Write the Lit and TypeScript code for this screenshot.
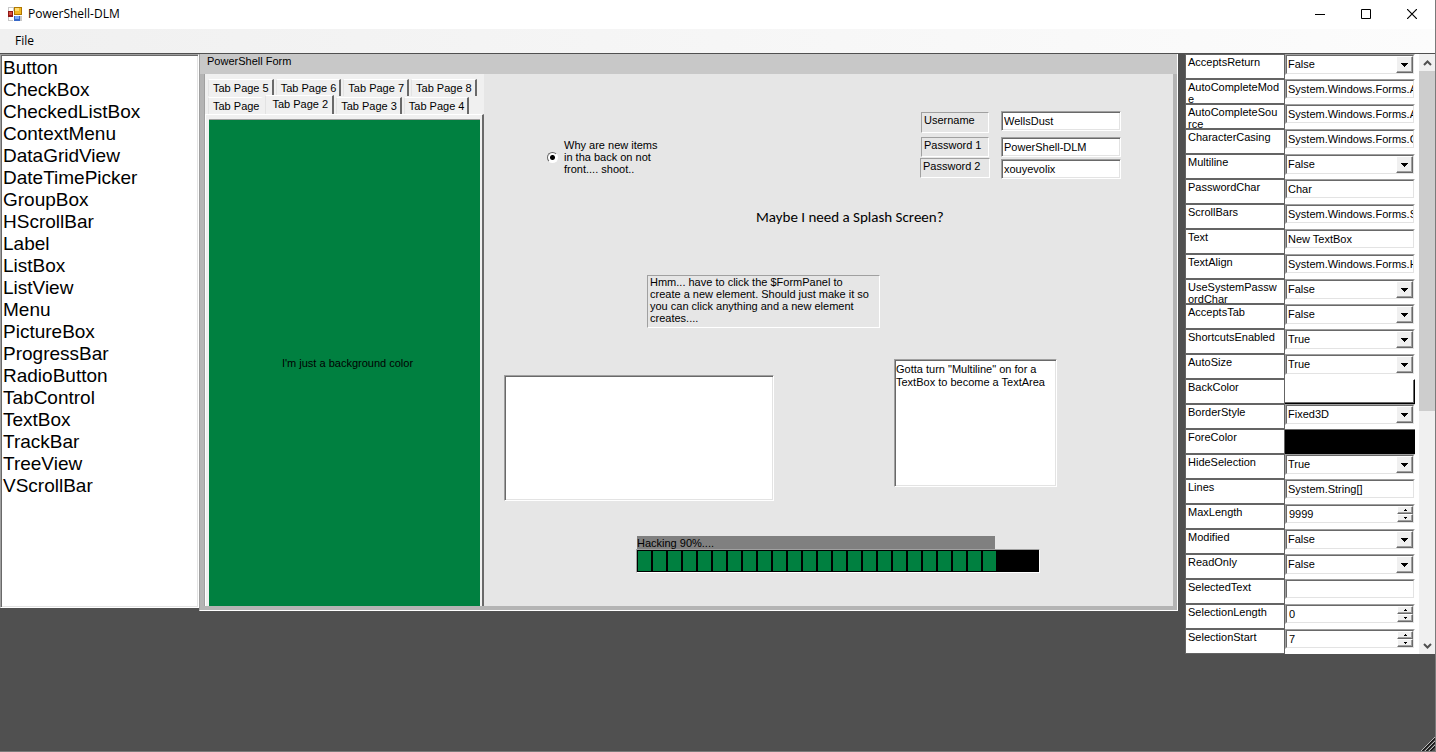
import { LitElement, html, svg, css } from "lit";
import { customElement } from "lit/decorators.js";

type Kind = "select" | "text" | "number" | "back" | "fore";

const CONTROLS = [
  "Button", "CheckBox", "CheckedListBox", "ContextMenu", "DataGridView",
  "DateTimePicker", "GroupBox", "HScrollBar", "Label", "ListBox", "ListView",
  "Menu", "PictureBox", "ProgressBar", "RadioButton", "TabControl", "TextBox",
  "TrackBar", "TreeView", "VScrollBar",
];

const PROPERTIES: [string, Kind, string][] = [
  ["AcceptsReturn", "select", "False"],
  ["AutoCompleteMode", "text", "System.Windows.Forms.AutoCompleteMode"],
  ["AutoCompleteSource", "text", "System.Windows.Forms.AutoCompleteSource"],
  ["CharacterCasing", "text", "System.Windows.Forms.CharacterCasing"],
  ["Multiline", "select", "False"],
  ["PasswordChar", "text", "Char"],
  ["ScrollBars", "text", "System.Windows.Forms.ScrollBars"],
  ["Text", "text", "New TextBox"],
  ["TextAlign", "text", "System.Windows.Forms.HorizontalAlignment"],
  ["UseSystemPasswordChar", "select", "False"],
  ["AcceptsTab", "select", "False"],
  ["ShortcutsEnabled", "select", "True"],
  ["AutoSize", "select", "True"],
  ["BackColor", "back", ""],
  ["BorderStyle", "select", "Fixed3D"],
  ["ForeColor", "fore", ""],
  ["HideSelection", "select", "True"],
  ["Lines", "text", "System.String[]"],
  ["MaxLength", "number", "9999"],
  ["Modified", "select", "False"],
  ["ReadOnly", "select", "False"],
  ["SelectedText", "text", ""],
  ["SelectionLength", "number", "0"],
  ["SelectionStart", "number", "7"],
];

@customElement("property-grid")
export class PropertyGrid extends LitElement {
  static styles = css`
    :host { display: flex; background: #fff; font: 11px/12px "Liberation Sans", Arial, sans-serif; color: #000; }
    * { box-sizing: border-box; }
    .rows { flex: 1; min-width: 0; padding-right: 4px; }
    .row { display: grid; grid-template-columns: 100px minmax(0, 1fr); height: 25px; }
    .name { border: 1px solid #646464; padding: 1px 4px 0 2px; overflow: hidden; word-break: break-all; }
    input, select, button { font: inherit; color: inherit; margin: 0; border-radius: 0; outline: 0; }
    .field { display: flex; height: 20px; background: #fff; border: 1px solid; border-color: #a0a0a0 #fff #fff #a0a0a0; }
    .inner { display: grid; grid-template-columns: minmax(0, 1fr) auto; flex: 1; min-width: 0; border: 1px solid; border-color: #696969 #e3e3e3 #e3e3e3 #696969; }
    .inner > input { width: 100%; min-width: 0; height: 16px; padding: 0 0 0 1px; border: 0; background: none; appearance: textfield; }
    .inner > input::-webkit-inner-spin-button { display: none; }
    .select { height: 21px; }
    .select select { grid-area: 1 / 1 / 2 / 3; width: 100%; appearance: none; border: 0; padding: 0 0 2px 1px; background: none; }
    .drop { grid-area: 1 / 2; display: grid; place-items: center; width: 17px; pointer-events: none; }
    .raised { background: #f0f0f0; border: 1px solid; border-color: #fff #696969 #696969 #fff; box-shadow: inset -1px -1px #a0a0a0; }
    .spin { display: grid; grid-template-rows: 1fr 1fr; width: 16px; }
    .spin button { display: grid; place-items: center; min-height: 0; padding: 0; }
    .number .inner > input { padding-left: 2px; }
    .swatch { height: 25px; width: 100%; padding: 0; }
    .back { background: #fff; border: solid; border-width: 1px 1px 1px 0; border-color: #fff #000 #000; box-shadow: inset -1px -1px #696969; }
    .fore { background: #000; border: 0; border-top: 1px solid #696969; }
    .scroll { display: flex; flex-direction: column; width: 16px; background: #f0f0f0; }
    .scroll button { display: grid; place-items: center; height: 17px; padding: 0; border: 0; background: none; }
    .track { flex: 1; }
    .thumb { height: 60%; background: #cdcdcd; }
  `;

  private control(name: string, kind: Kind, value: string) {
    if (kind === "back" || kind === "fore")
      return html`<button id=${name} class="swatch ${kind}" aria-label=${name}></button>`;
    if (kind === "select")
      return html`<div class="field select"><div class="inner">
        <select id=${name}><option>${value}</option></select>
        <span class="drop raised"><svg width="7" height="4"><path d="M0 0h7v1h-1v1h-1v1h-1v1h-1v-1h-1v-1h-1v-1h-1z"/></svg></span>
      </div></div>`;
    if (kind === "number")
      return html`<div class="field number"><div class="inner">
        <input id=${name} type="number" .value=${value}>
        <span class="spin">
          <button class="raised" aria-label="Increase"><svg width="3" height="2"><path d="M1 0h1v1h1v1h-3v-1h1z"/></svg></button>
          <button class="raised" aria-label="Decrease"><svg width="3" height="2"><path d="M0 0h3v1h-1v1h-1v-1h-1z"/></svg></button>
        </span>
      </div></div>`;
    return html`<div class="field"><div class="inner"><input id=${name} type="text" .value=${value}></div></div>`;
  }

  render() {
    return html`
      <div class="rows">
        ${PROPERTIES.map(([name, kind, value]) => html`
          <div class="row"><label class="name" for=${name}>${name}</label>${this.control(name, kind, value)}</div>`)}
      </div>
      <div class="scroll">
        <button aria-label="Scroll up"><svg width="9" height="6"><path d="M1 5l3.500-3.500L8 5" fill="none" stroke="#505050" stroke-width="2"/></svg></button>
        <div class="track"><div class="thumb"></div></div>
        <button aria-label="Scroll down"><svg width="9" height="6"><path d="M1 1l3.500 3.500L8 1" fill="none" stroke="#505050" stroke-width="2"/></svg></button>
      </div>`;
  }
}

@customElement("design-form")
export class DesignForm extends LitElement {
  static styles = css`
    :host { display: flex; flex-direction: column; border: 1px solid; border-color: transparent #fff #fff #a0a0a0; border-top: 0; background: #b4b4b4; font: 11px/12px "Liberation Sans", Arial, sans-serif; color: #000; }
    * { box-sizing: border-box; }
    .caption { height: 20px; padding: 1px 7px; background: #c8c8c8; }
    .surface { display: flex; flex: 1; min-height: 532px; margin: 0 4px; background: #e6e6e6; }
    .foot { height: 4px; }
    button, input, textarea { font: inherit; color: inherit; margin: 0; border-radius: 0; outline: 0; }

    .tabs { display: flex; flex-direction: column; width: 280px; padding-top: 5px; background: #f0f0f0; border-left: 1px solid #a0a0a0; }
    .strip { display: flex; gap: 2px; height: 18px; padding-left: 3px; }
    .strip.near { height: 17px; }
    .tab { height: 17px; padding: 0 3px 1px 4px; white-space: nowrap; background: #f0f0f0; border: solid; border-width: 1px 2px 0 1px; border-color: #fff #696969 #696969 #e3e3e3; }
    .tab.plain { border-right-color: #f0f0f0; padding-right: 2px; }
    .tab.active { height: 20px; margin-top: -2px; padding: 0 4px 3px 6px; }
    .page { flex: 1; display: flex; padding: 4px 2px 0 3px; border: solid; border-width: 1px 2px 0 1px; border-color: #fff #696969 #696969 #fff; }
    .fill { flex: 1; display: grid; place-items: center; padding-left: 6px; background: #008040; border-top: 1px solid #a0a0a0; }

    .canvas { position: relative; flex: 1; min-width: 0; overflow: hidden; }
    .item { position: absolute; }
    .sunk { border: 1px solid; border-color: #a0a0a0 #fff #fff #a0a0a0; padding: 1px 2px; }
    .box { background: #fff; border: 1px solid; border-color: #a0a0a0 #fff #fff #a0a0a0; box-shadow: inset 1px 1px #696969, inset -1px -1px #e3e3e3; padding: 2px; resize: none; }
    .radio { left: 63px; top: 65px; width: 116px; display: flex; align-items: center; gap: 6px; }
    .radio input { appearance: none; flex: none; width: 11px; height: 11px; border-radius: 50%; background: radial-gradient(circle, #000 0 2px, #fff 3px); border: 1px solid; border-color: #696969 #fff #fff #696969; }
    .user { left: 437px; top: 38px; width: 68px; height: 21px; }
    .pass1 { left: 437px; top: 63px; width: 68px; height: 20px; }
    .pass2 { left: 436px; top: 84px; width: 70px; height: 20px; }
    .in1, .in2, .in3 { left: 517px; width: 120px; height: 20px; }
    .in1 { top: 37px; }
    .in2 { top: 63px; }
    .in3 { top: 85px; }
    .splash { left: 272px; top: 134px; font: 15px/18px Carlito, Lato, sans-serif; white-space: nowrap; }
    .note { left: 163px; top: 201px; width: 233px; height: 53px; padding: 0 6px 0 2px; }
    .empty { left: 20px; top: 301px; width: 270px; height: 126px; }
    .area { left: 410px; top: 285px; width: 163px; height: 128px; line-height: 13px; padding: 3px 1px; }
    .hack { left: 153px; top: 462px; width: 358px; height: 13px; padding-top: 1px; background: #808080; }
    .bar { left: 152px; top: 475px; width: 404px; height: 24px; display: flex; gap: 2px; padding: 1px; background: #000; border: 1px solid; border-color: #a0a0a0 #fff #fff #a0a0a0; }
    .chunk { width: 13px; background: #008040; }
  `;

  render() {
    return html`
      <div class="caption">PowerShell Form</div>
      <div class="surface">
        <div class="tabs">
          <div class="strip">
            ${[5, 6, 7, 8].map((n) => html`<button class="tab">Tab Page ${n}</button>`)}
          </div>
          <div class="strip near">
            <button class="tab plain">Tab Page</button>
            <button class="tab active">Tab Page 2</button>
            <button class="tab">Tab Page 3</button>
            <button class="tab">Tab Page 4</button>
          </div>
          <div class="page"><div class="fill">I'm just a background color</div></div>
        </div>
        <div class="canvas">
          <label class="item radio"><input type="radio" checked><span>Why are new items in tha back on not front.... shoot..</span></label>
          <label class="item sunk user" for="u">Username</label>
          <label class="item sunk pass1" for="p1">Password 1</label>
          <label class="item sunk pass2" for="p2">Password 2</label>
          <input class="item box in1" id="u" value="WellsDust">
          <input class="item box in2" id="p1" value="PowerShell-DLM">
          <input class="item box in3" id="p2" value="xouyevolix">
          <div class="item splash">Maybe I need a Splash Screen?</div>
          <div class="item sunk note">Hmm... have to click the $FormPanel to create a new element. Should just make it so you can click anything and a new element creates....</div>
          <textarea class="item box empty" aria-label="Empty text box"></textarea>
          <textarea class="item box area" aria-label="Text area" .value=${'Gotta turn "Multiline" on for a TextBox to become a TextArea'}></textarea>
          <div class="item hack">Hacking 90%....</div>
          <div class="item bar" role="progressbar" aria-label="Hacking" aria-valuenow="90">
            ${Array.from({ length: 24 }, () => html`<span class="chunk"></span>`)}
          </div>
        </div>
      </div>
      <div class="foot"></div>`;
  }
}

@customElement("app-root")
export class AppRoot extends LitElement {
  static styles = css`
    :host { display: flex; flex-direction: column; position: relative; box-sizing: border-box; height: 100vh; overflow: hidden; background: #505050; border: solid #7a7a7a; border-width: 0 1px 1px 0; font: 12px/16px "Open Sans", sans-serif; color: #000; }
    * { box-sizing: border-box; }
    button { font: inherit; color: inherit; border: 0; background: none; padding: 0; }
    .title { display: flex; align-items: center; height: 29px; padding: 0 0 2px 8px; background: #fff; }
    .name { flex: 1; padding-left: 6px; }
    .win { display: grid; place-items: center; width: 46px; height: 26px; }
    .menu { display: flex; align-items: center; height: 25px; padding-left: 15px; background: linear-gradient(90deg, #f0f0f0, #fcfcfc); border-bottom: 1px solid #505050; }
    .main { display: flex; align-items: flex-start; gap: 7px; }
    .left { flex: 1; min-width: 0; display: flex; }
    .tools { width: 199px; margin: 0 0 3px; padding: 2px; list-style: none; background: #fff; border: 1px solid; border-color: #a0a0a0 #fff #fff #a0a0a0; box-shadow: inset 1px 1px #696969, inset -1px -1px #e3e3e3; font: 19px/22px "Liberation Sans", Arial, sans-serif; }
    .tools li { display: flex; }
    .tools button { flex: 1; text-align: left; }
    design-form { flex: 1; min-width: 0; }
    property-grid { width: 250px; }
    .grip { position: absolute; right: 0; bottom: 0; }
  `;

  render() {
    const line = (d: string, w = 1) => svg`<path d=${d} fill="none" stroke="#000" stroke-width=${w}/>`;
    return html`
      <header class="title">
        <svg width="14" height="14" shape-rendering="crispEdges">
          <path d="M0 0h6v4h-6zM0 10h5v4h-5zM12 9h2v5h-2z" fill="#c8c8c8"/>
          <path d="M1 1h4v3h-4zM1 10h4v3h-4z" fill="#fff"/>
          <path d="M6 0h8v8h-8z" fill="#b07800"/><path d="M7 1h6v6h-6z" fill="#f2b822"/><path d="M7 1h4v3h-4z" fill="#ffdc70"/>
          <path d="M0 4h5v6h-5z" fill="#901818"/><path d="M1 5h3v3h-3z" fill="#d85040"/>
          <path d="M6 9h6v5h-6z" fill="#3868c8"/><path d="M7 9h4v3h-4z" fill="#78a8f8"/>
        </svg>
        <span class="name">PowerShell-DLM</span>
        <button class="win" aria-label="Minimize"><svg width="10" height="10">${line("M0 5.500h10")}</svg></button>
        <button class="win" aria-label="Maximize"><svg width="10" height="10">${line("M.5.5h9v9h-9z")}</svg></button>
        <button class="win" aria-label="Close"><svg width="10" height="10">${line("M0 0l10 10M10 0L0 10", 1.2)}</svg></button>
      </header>
      <nav class="menu"><button>File</button></nav>
      <main class="main">
        <div class="left">
          <ul class="tools">${CONTROLS.map((c) => html`<li><button>${c}</button></li>`)}</ul>
          <design-form></design-form>
        </div>
        <property-grid></property-grid>
      </main>
      <svg class="grip" width="14" height="14">
        <path d="M0 14L14 0M4 14L14 4M8 14L14 8" stroke="#b8b8b8" fill="none"/>
        <path d="M1 14L14 1M2 14L14 2M5 14L14 5M6 14L14 6M9 14L14 9M10 14L14 10" stroke="#1c1c1c" fill="none"/>
      </svg>`;
  }
}
